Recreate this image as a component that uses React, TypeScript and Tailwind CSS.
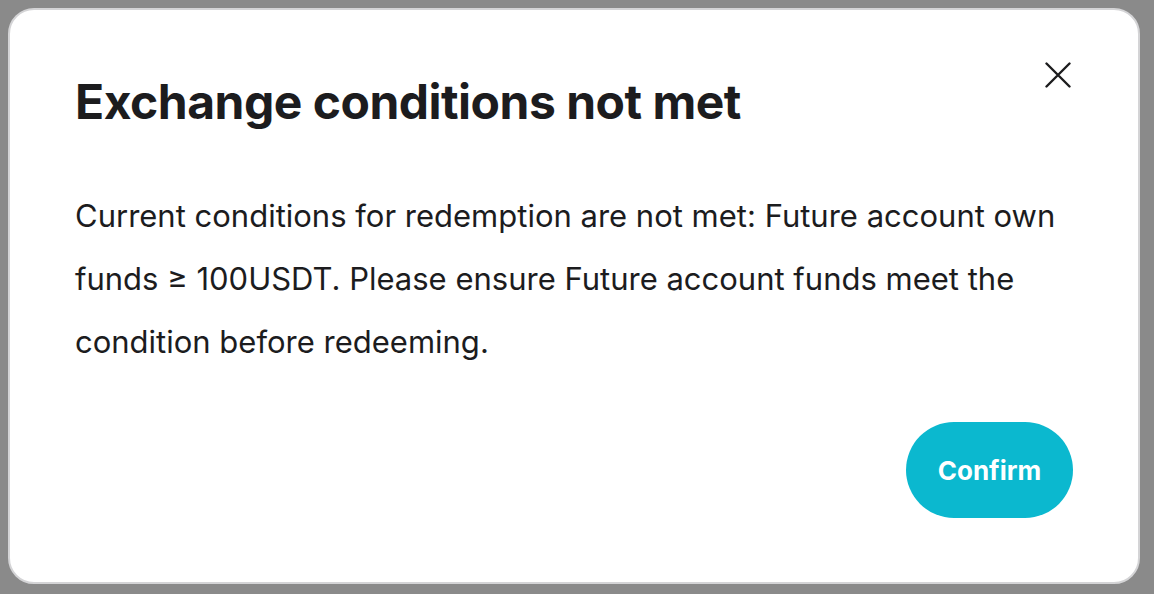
export default function App() {
  return (
    <div className="h-[594px] w-[1154px] bg-[#8a8a8a] p-2 font-['Inter',sans-serif]">
      <div className="relative flex h-[576px] w-[1132px] flex-col rounded-[26px] border-2 border-[#d4d4d6] bg-white px-[65px] pt-[64px] pb-[64px]">
        <button className="absolute right-[67px] top-[52px] text-[#1c1c1e]">
          <svg width="26" height="26" viewBox="0 0 26 26" fill="none" stroke="currentColor" strokeWidth="2.4" strokeLinecap="round">
            <path d="M1.5 1.5L24.5 24.5M24.5 1.5L1.5 24.5" />
          </svg>
        </button>
        <h1 className="text-[48px] font-bold leading-[56px] tracking-[-0.5px] text-[#1c1c1e]">
          Exchange conditions not met
        </h1>
        <p className="mt-[54px] text-[31px] leading-[63px] text-[#1c1c1e]">
          Current conditions for redemption are not met: Future account own funds ≥ 100USDT. Please ensure Future account funds meet the condition before redeeming.
        </p>
        <div className="mt-auto flex justify-end">
          <button className="h-[96px] w-[167px] rounded-full bg-[#0bb8cf] text-[26px] font-bold text-white">
            Confirm
          </button>
        </div>
      </div>
    </div>
  );
}
